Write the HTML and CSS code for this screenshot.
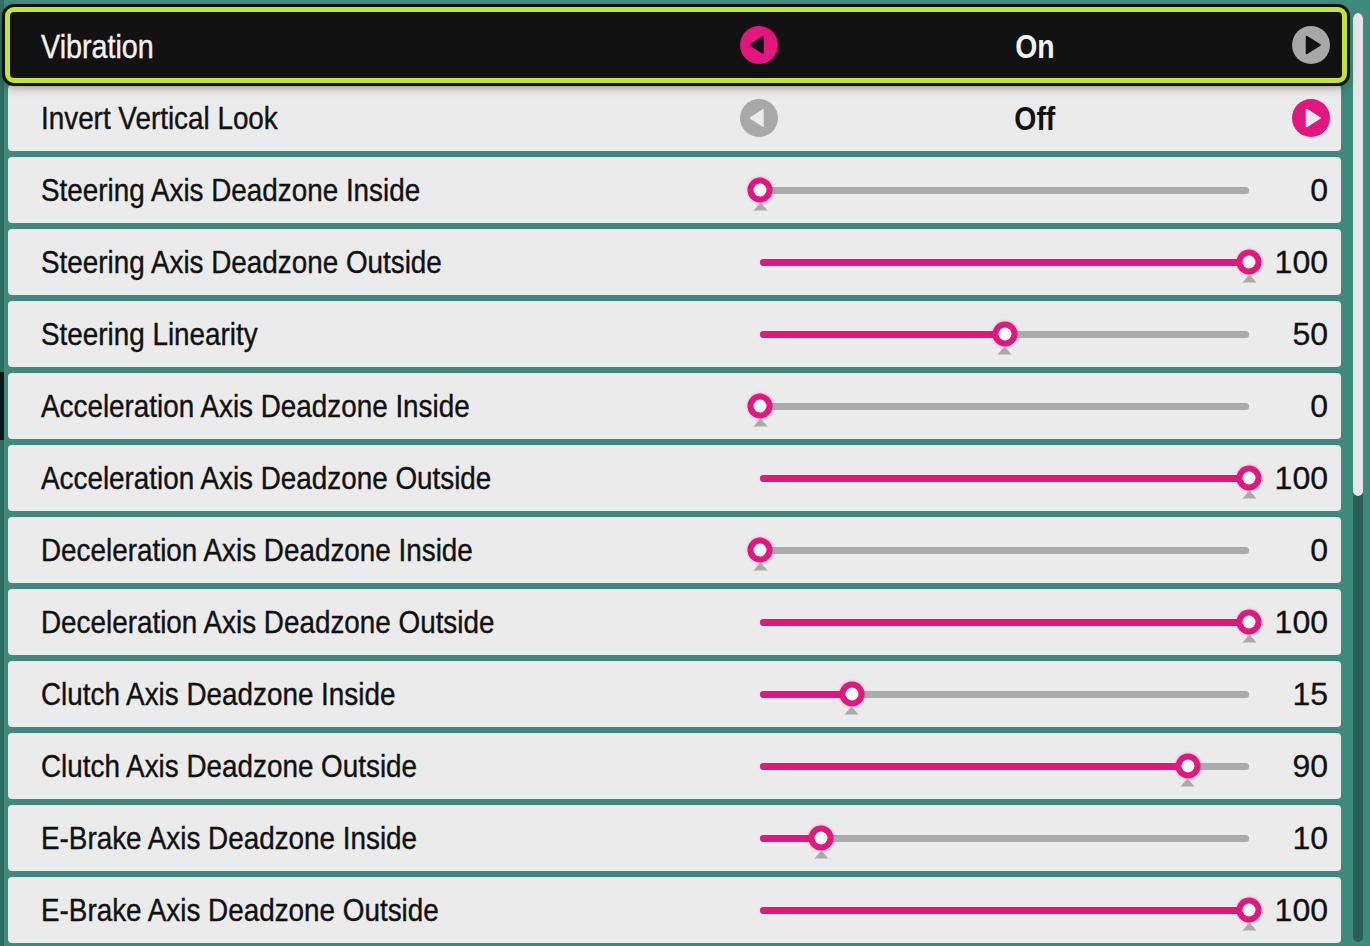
FILE: index.html
```html
<!DOCTYPE html>
<html lang="en">
<head>
<meta charset="utf-8">
<title>Controller Settings</title>
<link rel="stylesheet" href="styles.css">
</head>
<body>
<div class="screen">
  <div class="edge"></div>
  <div class="list">
    <div class="row selected">
      <div class="label">Vibration</div>
      <div class="toggle">
        <svg class="arrow on" viewBox="0 0 38 38"><circle cx="19" cy="19" r="19"/><path d="M10.5 19 L23 11 L23 27 Z"/></svg>
        <span class="tval">On</span>
        <svg class="arrow off" viewBox="0 0 38 38"><circle cx="19" cy="19" r="19"/><path d="M28 19 L14.5 10.5 L14.5 27.5 Z"/></svg>
      </div>
    </div>
    <div class="row">
      <div class="label">Invert Vertical Look</div>
      <div class="toggle">
        <svg class="arrow off" viewBox="0 0 38 38"><circle cx="19" cy="19" r="19"/><path d="M10.5 19 L23 11 L23 27 Z"/></svg>
        <span class="tval">Off</span>
        <svg class="arrow on" viewBox="0 0 38 38"><circle cx="19" cy="19" r="19"/><path d="M28 19 L14.5 10.5 L14.5 27.5 Z"/></svg>
      </div>
    </div>
    <div class="row">
      <div class="label">Steering Axis Deadzone Inside</div>
      <div class="slider"><div class="track"><div class="fill" style="width:0%"></div><div class="knob" style="left:0%"></div></div><div class="num">0</div></div>
    </div>
    <div class="row">
      <div class="label">Steering Axis Deadzone Outside</div>
      <div class="slider"><div class="track"><div class="fill" style="width:100%"></div><div class="knob" style="left:100%"></div></div><div class="num">100</div></div>
    </div>
    <div class="row">
      <div class="label">Steering Linearity</div>
      <div class="slider"><div class="track"><div class="fill" style="width:50%"></div><div class="knob" style="left:50%"></div></div><div class="num">50</div></div>
    </div>
    <div class="row">
      <div class="label">Acceleration Axis Deadzone Inside</div>
      <div class="slider"><div class="track"><div class="fill" style="width:0%"></div><div class="knob" style="left:0%"></div></div><div class="num">0</div></div>
    </div>
    <div class="row">
      <div class="label">Acceleration Axis Deadzone Outside</div>
      <div class="slider"><div class="track"><div class="fill" style="width:100%"></div><div class="knob" style="left:100%"></div></div><div class="num">100</div></div>
    </div>
    <div class="row">
      <div class="label">Deceleration Axis Deadzone Inside</div>
      <div class="slider"><div class="track"><div class="fill" style="width:0%"></div><div class="knob" style="left:0%"></div></div><div class="num">0</div></div>
    </div>
    <div class="row">
      <div class="label">Deceleration Axis Deadzone Outside</div>
      <div class="slider"><div class="track"><div class="fill" style="width:100%"></div><div class="knob" style="left:100%"></div></div><div class="num">100</div></div>
    </div>
    <div class="row">
      <div class="label">Clutch Axis Deadzone Inside</div>
      <div class="slider"><div class="track"><div class="fill" style="width:18.75%"></div><div class="knob" style="left:18.75%"></div></div><div class="num">15</div></div>
    </div>
    <div class="row">
      <div class="label">Clutch Axis Deadzone Outside</div>
      <div class="slider"><div class="track"><div class="fill" style="width:87.5%"></div><div class="knob" style="left:87.5%"></div></div><div class="num">90</div></div>
    </div>
    <div class="row">
      <div class="label">E-Brake Axis Deadzone Inside</div>
      <div class="slider"><div class="track"><div class="fill" style="width:12.5%"></div><div class="knob" style="left:12.5%"></div></div><div class="num">10</div></div>
    </div>
    <div class="row">
      <div class="label">E-Brake Axis Deadzone Outside</div>
      <div class="slider"><div class="track"><div class="fill" style="width:100%"></div><div class="knob" style="left:100%"></div></div><div class="num">100</div></div>
    </div>
  </div>
  <div class="scroll"><div class="thumb"></div></div>
</div>
</body>
</html>
```

FILE: styles.css
```css
* { box-sizing: border-box; }

html, body {
  margin: 0;
  padding: 0;
  height: 946px;
  overflow: hidden;
}

body {
  background: #3e8a7b;
  font-family: "Liberation Sans", Arial, sans-serif;
  color: #111;
}

.screen {
  display: flex;
  align-items: flex-start;
  padding: 13px 0 0 0;
}

.edge {
  width: 4px;
  height: 946px;
  margin: -13px 4px 0 0;
  background: linear-gradient(to bottom,
    #2f6c61 0, #2f6c61 372px,
    #0c1715 372px, #0c1715 440px,
    #2f6c61 440px, #2f6c61 100%);
}

.list {
  width: 1333px;
  display: flex;
  flex-direction: column;
  gap: 6px;
}

.row {
  --bg: #ebebeb;
  height: 66px;
  background: var(--bg);
  border-radius: 4px;
  display: grid;
  grid-template-columns: 1fr 590px;
  align-items: center;
  padding: 0 11px 0 33px;
}

.row.selected {
  --bg: #121212;
  height: 76px;
  margin: -6px -6px -4px -3px;
  border: 5px solid #c3e532;
  border-radius: 9px;
  box-shadow: 0 0 0 3px #111, 0 5px 10px rgba(0, 0, 0, 0.35);
  padding: 0 12px 0 31px;
  color: #f2f2f2;
  position: relative;
  z-index: 2;
}

.label {
  font-size: 32px;
  line-height: 1;
  white-space: nowrap;
  transform: scaleX(0.87);
  transform-origin: left center;
  -webkit-text-stroke: 0.4px currentColor;
}

.row.selected .label {
  font-size: 33px;
  padding-top: 2px;
}

.toggle {
  display: flex;
  align-items: center;
  justify-content: space-between;
}

.arrow {
  width: 38px;
  height: 38px;
  display: block;
}
.arrow path {
  fill: var(--bg);
  stroke: var(--bg);
  stroke-width: 1.5;
  stroke-linejoin: round;
}
.arrow.on circle { fill: #e3157f; }
.arrow.off circle { fill: #a8a8a8; }

.tval {
  font-size: 33px;
  font-weight: bold;
  line-height: 1;
  transform: scaleX(0.86);
}

.row.selected .tval {
  font-size: 33px;
  padding-top: 2px;
}

.slider {
  display: flex;
  align-items: center;
  padding-left: 20px;
}

.track {
  position: relative;
  width: 489px;
  height: 7px;
  border-radius: 4px;
  background: #aaaaaa;
}

.fill {
  height: 100%;
  border-radius: 4px;
  background: #e3157f;
}

.knob {
  position: absolute;
  top: 50%;
  width: 25px;
  height: 25px;
  border-radius: 50%;
  border: 6px solid #e3157f;
  background: #ffffff;
  transform: translate(-50%, -50%);
  box-shadow: 0 0 3px rgba(227, 21, 127, 0.4);
}

.knob::after {
  content: "";
  position: absolute;
  left: 50%;
  top: 19px;
  transform: translateX(-50%);
  border-left: 7px solid transparent;
  border-right: 7px solid transparent;
  border-bottom: 8px solid #aaaaaa;
}

.num {
  flex: 1;
  text-align: right;
  padding-right: 2px;
  font-size: 32px;
  line-height: 1;
  -webkit-text-stroke: 0.3px currentColor;
}

.scroll {
  margin-left: 12px;
  width: 10px;
  height: 929px;
  border-radius: 5px;
  background: #2d5e56;
  overflow: hidden;
}

.thumb {
  height: 483px;
  border-radius: 5px;
  background: #e6e6e6;
}
```
